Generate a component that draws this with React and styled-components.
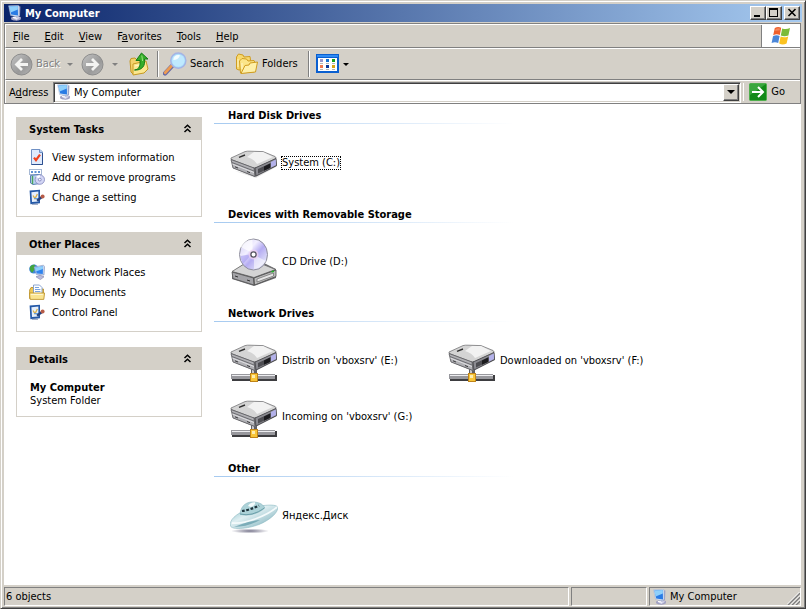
import React from 'react'
import styled, { createGlobalStyle, css } from 'styled-components'

const GlobalStyle = createGlobalStyle`
  * {
    box-sizing: border-box;
  }
  body {
    margin: 0;
    background: #d4d0c8;
  }
  body, button, input {
    font-family: 'DejaVu Sans Condensed', 'DejaVu Sans', sans-serif;
    font-size: 11px;
    line-height: 14px;
    color: #000;
  }
`

/* icons */

const ComputerIcon = ({ size = 16 }) => (
  <svg width={size} height={size} viewBox="0 0 16 16" aria-hidden="true">
    <ellipse cx="9" cy="13.6" rx="5" ry="2" fill="#a3a3c4" />
    <path d="M4.5 12.8L9 11L14 12.5L9.5 15.4z" fill="#d6d6ea" stroke="#8f8fb4" strokeWidth=".5" />
    <path d="M10 1L13.4 1.6L13 11L9 13z" fill="#9c9ec4" />
    <path d="M1.6 .8L10.8 .4L12 .8L12 10L11 11.8L3.6 10.6z" fill="#d4e0f4" stroke="#9fb0d0" strokeWidth=".5" />
    <path d="M2.4 1.6L10.8 1.1L11 10.4L4.2 9.6z" fill="#2a7be4" />
    <path d="M2.4 1.6L10.8 1.1L10.9 4.4L3.6 7.6z" fill="#8fd0fb" />
    <path d="M6 12.4L9.8 13.2" stroke="#fff" />
  </svg>
)

const NavIcon = ({ flip }) => (
  <svg width="23" height="23" viewBox="0 0 23 23" aria-hidden="true">
    <defs>
      <linearGradient id={flip ? 'navF' : 'navB'} x1="0" y1="0" x2="1" y2="1">
        <stop offset="0" stopColor="#c4c4c4" />
        <stop offset=".6" stopColor="#999" />
        <stop offset="1" stopColor="#b4b4b4" />
      </linearGradient>
    </defs>
    <circle cx="11.5" cy="11.5" r="10.5" fill={`url(#${flip ? 'navF' : 'navB'})`} stroke="#8c8c8c" />
    <path
      d={flip ? 'M5 11.5H16M11 6L16.5 11.5L11 17' : 'M18 11.5H7M12 6L6.5 11.5L12 17'}
      fill="none" stroke="#f4f4f2" strokeWidth="2.8"
    />
  </svg>
)

const UpIcon = () => (
  <svg width="24" height="24" viewBox="0 0 24 24" aria-hidden="true">
    <path d="M3 9L4 6.500L8 6L10 8L17 6.5L18 20L6 22L4 20z" fill="#f3d26b" stroke="#c29622" />
    <path d="M6 12L19 9L21 17L17 21L6 23z" fill="#fbe78f" stroke="#c69a24" />
    <path d="M8 14L18 11.5" stroke="#fff8cd" />
    <path d="M7.500 18C12 17.5 13.5 14 13 8.5H9L14.500 1L21 7H17.500C18.500 14 15 18.5 7.500 18z" fill="#35ad2a" stroke="#147c18" />
    <path d="M14.800 3.500L15.600 9" stroke="#98e47d" />
  </svg>
)

const SearchIcon = () => (
  <svg width="24" height="24" viewBox="0 0 24 24" aria-hidden="true">
    <path d="M2 21.5L9 14" stroke="#6769a5" strokeWidth="4.4" strokeLinecap="round" />
    <path d="M2.2 20.8L8.5 14" stroke="#ed9b52" strokeWidth="2.8" strokeLinecap="round" />
    <circle cx="15.3" cy="8.6" r="7.6" fill="#a6dcfa" stroke="#a5b3e4" strokeWidth="1.4" />
    <circle cx="15.3" cy="8.6" r="6.2" fill="#bfe9fe" />
    <path d="M10.3 8C10.5 4 14 2.2 17 3.4C16 6.5 13 8 10.3 8z" fill="#f4fdff" />
  </svg>
)

const FoldersIcon = () => (
  <svg width="24" height="24" viewBox="0 0 24 24" aria-hidden="true">
    <path d="M1.5 17L1.5 5L3.5 2L8 3L9 5L15 4.5L16.5 15L4 18z" fill="#f7d96f" stroke="#cf9c20" />
    <path d="M5.5 21L4.5 9L7 6.5L11.5 7L13 9L19 8.5L20 11L19 20z" fill="#fbe589" stroke="#cf9c20" />
    <path d="M6 21.5L10 13.5L14 13L15 11L22.5 10L20.5 20z" fill="#fef0a9" stroke="#cf9c20" />
    <path d="M3 7V15M7 11V17" stroke="#fff6cc" />
  </svg>
)

const ViewsIcon = () => (
  <svg width="24" height="20" viewBox="0 0 24 20" shapeRendering="crispEdges" aria-hidden="true">
    <rect x="0" y="0" width="23" height="19" rx="1" fill="#0a5fd0" />
    <rect x="1" y="1" width="21" height="2" fill="#2f8bf4" />
    <rect x="2" y="4" width="19" height="13" fill="#fff" />
    <rect x="4" y="5" width="3" height="3" fill="#9a98cc" />
    <rect x="10" y="5" width="3" height="3" fill="#1572d2" />
    <rect x="16" y="5" width="3" height="3" fill="#17a01c" />
    <rect x="4" y="11" width="3" height="3" fill="#f0784e" />
    <rect x="10" y="11" width="3" height="3" fill="#0a3797" />
    <rect x="16" y="11" width="3" height="3" fill="#d9a417" />
    <path d="M4 9.5h3M10 9.5h3M16 9.5h3M4 15.5h3M10 15.5h3M16 15.5h3" stroke="#b5b5b5" />
  </svg>
)

const FlagIcon = () => (
  <svg width="20" height="20" viewBox="0 0 20 20" aria-hidden="true">
    <path d="M3.8 2Q7 .2 10.2 1.8L8.8 9Q5.6 7.6 2.2 9.2z" fill="#f0602c" />
    <path d="M11.2 2.4Q15 4 19 2L17.4 9.4Q13.4 11 9.8 9.4z" fill="#7cbb3a" />
    <path d="M2 10.2Q5.4 8.6 8.6 10L7.2 17Q4 15.4 .6 17z" fill="#4a86d8" />
    <path d="M9.6 10.6Q13.2 12 17.2 10.4L15.6 17.6Q11.6 19.4 8.2 17.6z" fill="#fbc220" />
    <path d="M4.6 3Q7 1.8 9 2.6L8.6 4.6Q6.2 4 4.2 5z" fill="#f79a70" opacity=".7" />
  </svg>
)

const GoIcon = () => (
  <svg width="18" height="18" viewBox="0 0 18 18" aria-hidden="true">
    <rect x=".5" y=".5" width="17" height="17" rx="1" fill="#128a18" stroke="#4fae4d" />
    <path d="M1 1H17L1 12z" fill="#5fc263" opacity=".5" />
    <path d="M3 9H14M9 4L14 9L9 14" fill="none" stroke="#fff" strokeWidth="2" />
  </svg>
)

const InfoIcon = () => (
  <svg width="16" height="16" viewBox="0 0 16 16" aria-hidden="true">
    <path d="M2.5 .5H11L13.5 3V15.5H2.5z" fill="#dfeafc" stroke="#6f90c4" />
    <path d="M10.5 .5V3.5H13.5" fill="#b8cdf0" stroke="#6f90c4" />
    <path d="M13.5 4V15.5H2.500" fill="none" stroke="#2d4f8f" />
    <path d="M5 8.6L7 11.2L11 5.6" fill="none" stroke="#f0401c" strokeWidth="2.2" />
  </svg>
)

const ProgramsIcon = () => (
  <svg width="16" height="16" viewBox="0 0 16 16" aria-hidden="true">
    <rect x=".5" y=".5" width="12" height="5" fill="#fff" stroke="#a6b8d4" />
    <path d="M2 3h2M5.500 3h2M9 3h2" stroke="#5f92d4" strokeWidth="2" />
    <path d="M1.5 6.500L9 5.5L11 6V14.5L4 15.5L1.5 14z" fill="#b9d3f0" stroke="#5a7fb4" />
    <path d="M3.500 7V15" stroke="#4aa45a" strokeWidth="1.400" />
    <circle cx="10.8" cy="10.6" r="4.7" fill="#d3d6f5" stroke="#8085bd" strokeWidth=".8" />
    <path d="M10.8 10.6L7 7.6A4.4 4.4 0 0 1 11 6.2z" fill="#fff" />
    <circle cx="10.8" cy="10.6" r="1.4" fill="#fff" stroke="#7177b2" strokeWidth=".8" />
  </svg>
)

const SettingIcon = () => (
  <svg width="16" height="16" viewBox="0 0 16 16" aria-hidden="true">
    <path d="M.6 1.6L11 .8V14.2L1.4 15.2z" fill="#2459a8" />
    <path d="M2.4 3.2L9.4 2.6V12.4L3 13z" fill="#e6f0fd" />
    <path d="M4 6.5L6 9.6L8.4 5" fill="none" stroke="#d8b04a" strokeWidth="1.3" />
    <path d="M5 9.6H10" stroke="#5d9be0" />
    <path d="M8 11.6L13 8" stroke="#26437c" strokeWidth="2.4" />
    <circle cx="13.6" cy="7.6" r="2" fill="#b75c48" />
    <path d="M3 15.200H9" stroke="#7c8db0" />
  </svg>
)

const NetworkIcon = () => (
  <svg width="16" height="16" viewBox="0 0 16 16" aria-hidden="true">
    <circle cx="4.8" cy="5" r="4.6" fill="#3f86d8" />
    <path d="M1 3Q3 0 6 .8Q5 3 6.4 4.6Q4.2 7 3.6 8.8Q0 6.8 1 3z" fill="#43a63c" />
    <path d="M5 3L14.4 1.2L15.6 2.4L15 11L7.4 10.6z" fill="#c8d6ef" stroke="#7f90bb" strokeWidth=".6" />
    <path d="M6 3.8L14 2.2L13.8 10L7.800 9.6z" fill="#2f83ee" />
    <path d="M6 3.8L14 2.2L13.9 5L6.800 7.4z" fill="#8fd0fb" />
    <path d="M7 12.8L11 11.2L15 12.8L11.4 15.6z" fill="#b9bbdc" stroke="#7c7fa8" strokeWidth=".6" />
  </svg>
)

const DocumentsIcon = () => (
  <svg width="16" height="16" viewBox="0 0 16 16" aria-hidden="true">
    <path d="M.6 6L2 3.500H4L5 5H14.500V14.5H.6z" fill="#eec755" stroke="#b98d22" strokeWidth=".8" />
    <path d="M4.500 1H10.5L13 3.5V11H4.500z" fill="#fff" stroke="#6e8fc4" strokeWidth=".8" />
    <path d="M6 3.5h4M6 5.5h5.4M6 7.5h5.4" stroke="#79a3de" />
    <path d="M.4 9H15.6L14.8 15.4H1.2z" fill="#fae491" stroke="#b98d22" strokeWidth=".8" />
    <path d="M2 10.4H13.8" stroke="#fffad8" />
  </svg>
)

const ChevronsIcon = () => (
  <svg width="9" height="9" viewBox="0 0 9 9" aria-hidden="true">
    <path d="M1.500 4L4.5 1.200L7.500 4M1.500 8L4.5 5.200L7.500 8" fill="none" stroke="#000" strokeWidth="1.500" />
  </svg>
)

const DriveBody = () => (
  <g>
    <path d="M1 8L24 2L46 7L47 16L25 27L3 18z" fill="#77777c" />
    <path d="M1 8L15 1.600Q17 1 20 1.200L33 1.600L45 6.500Q47 8 45 9L27 17.500Q25 18 22 17.400L2 9.800Q.500 9 1 8z" fill="#d4d4d4" stroke="#77777a" strokeWidth=".8" />
    <path d="M17 7L24 2H33L43 7L27 14Q24 9 17 7z" fill="#f2f2f2" />
    <path d="M1 9.500L24 18L25 26.500L3 18z" fill="#b0b0b4" stroke="#5c5c60" strokeWidth=".8" />
    <path d="M2 12.500L24 21" stroke="#6d6d72" />
    <path d="M2.500 14.200L24 22.500" stroke="#e0e0e3" />
    <path d="M25 18L46 8.500L46.500 15.500L26 26z" fill="#8b8b91" stroke="#454549" strokeWidth=".8" />
    <path d="M28 19L41 13V17.500L28 23.500z" fill="#4d4d52" />
    <path d="M34 16.500L40 13.500V18L34 20.800z" fill="#1b1b1e" />
    <path d="M41 12L45.800 9.500L46 15L41 17.500z" fill="#b3b1ea" />
    <path d="M9 7.400L15 5" stroke="#2d2d2d" strokeWidth="1.400" />
    <path d="M5 16.800L8 18M17 21.500L20 22.700" stroke="#3c3c3f" />
  </g>
)

const HardDiskIcon = () => (
  <svg width="48" height="48" viewBox="0 0 48 48" aria-hidden="true">
    <path d="M5 32L26 39L46 28L44 26L26 36z" fill="#c9c9c9" opacity=".5" />
    <g transform="translate(0 11)"><DriveBody /></g>
  </svg>
)

const CdDriveIcon = () => (
  <svg width="48" height="48" viewBox="0 0 48 48" aria-hidden="true">
    <defs>
      <linearGradient id="disc" x1="0" y1="0" x2="1" y2="1">
        <stop offset="0" stopColor="#cfcaf4" />
        <stop offset=".35" stopColor="#f2efff" />
        <stop offset=".55" stopColor="#b5acf2" />
        <stop offset=".8" stopColor="#dcdcf8" />
        <stop offset="1" stopColor="#9fa0b8" />
      </linearGradient>
    </defs>
    <path d="M2 34L15 25H34L46 31V40L24 48L2 41z" fill="#6d6d70" />
    <path d="M2 33.500L14 26H32L45.500 31.500L24 39.500z" fill="#d4d4d4" stroke="#6a6a6a" strokeWidth=".8" />
    <path d="M2 34L23.500 40L24 47L3 40.500z" fill="#a4a4a8" stroke="#555" strokeWidth=".8" />
    <path d="M24 40L46 32V38.500L24.500 47z" fill="#bcbcbc" stroke="#4c4c4c" strokeWidth=".8" />
    <path d="M27 41L43.500 35V38L27 44z" fill="#e6e6e6" stroke="#5b5b5b" strokeWidth=".6" />
    <path d="M41.500 34L44 33" stroke="#23b02c" strokeWidth="1.500" />
    <path d="M5 38L8 39M17 42L20 43" stroke="#333" />
    <ellipse cx="23.500" cy="16.500" rx="14" ry="15.500" fill="url(#disc)" stroke="#8f8f9c" />
    <path d="M22.500 15L10.500 9Q14 2 22.500 1.500z" fill="#fff" opacity=".7" />
    <path d="M24 17L36 23Q31 30 24 31z" fill="#fff" opacity=".55" />
    <path d="M22 16L13 26Q10.500 21 10.500 18z" fill="#a499f0" opacity=".6" />
    <circle cx="23.500" cy="16.500" r="5" fill="#eccff0" opacity=".8" />
    <circle cx="23.500" cy="16.500" r="2.600" fill="#fff" stroke="#55535f" strokeWidth="1.300" />
  </svg>
)

const NetworkDriveIcon = () => (
  <svg width="48" height="48" viewBox="0 0 48 48" aria-hidden="true">
    <rect x="21" y="29" width="6" height="9" fill="#5f5f65" />
    <rect x="22" y="29" width="2" height="9" fill="#c6c6cc" />
    <g transform="translate(0 7)"><DriveBody /></g>
    <rect x="2" y="38" width="45" height="6" fill="#3d3d40" />
    <rect x="1" y="37" width="44" height="5" fill="#98989d" />
    <rect x="2" y="38" width="43" height="1" fill="#ededf0" />
    <rect x="20.500" y="36.500" width="7" height="8" fill="#f8c63a" stroke="#c08418" />
    <rect x="22" y="38" width="3" height="3" fill="#fdedb0" />
  </svg>
)

const SaucerIcon = () => (
  <svg width="48" height="48" viewBox="0 0 48 48" aria-hidden="true">
    <defs>
      <linearGradient id="hull" x1="0" y1="0" x2="1" y2="1">
        <stop offset="0" stopColor="#7fb7c2" />
        <stop offset=".4" stopColor="#dfeff2" />
        <stop offset="1" stopColor="#72a9b5" />
      </linearGradient>
      <radialGradient id="shade">
        <stop offset="0" stopColor="#77758c" />
        <stop offset="1" stopColor="#77758c" stopOpacity="0" />
      </radialGradient>
    </defs>
    <ellipse cx="20" cy="39" rx="19" ry="2.500" fill="url(#shade)" />
    <path d="M.5 34C-1 28 6 22 16 18C28 13 46 11.500 47.500 15C49 20 40 28 29 32.500C17 37 2 38 .5 34z" fill="url(#hull)" stroke="#8dbac2" strokeWidth=".6" />
    <path d="M2 31Q12 32 25 27Q39 22 47 15" fill="none" stroke="#f4fafb" strokeWidth="1.800" />
    <path d="M4 35Q18 35 30 28Q19 29 12 32z" fill="#5e98a6" opacity=".7" />
    <path d="M10 22C11 13 17 9.500 24 10C30 10.500 34 13 34.500 16C30 21 18 25 10 22z" fill="#acd2d8" stroke="#86b4bd" strokeWidth=".6" />
    <path d="M18 14Q20 10 25 10.200Q26 13 21 15z" fill="#f4fbfc" />
    <path d="M12 19Q20 18 29 13.500" fill="none" stroke="#1e343d" strokeWidth="2.200" strokeDasharray="2.800 1.600" />
    <path d="M10 22Q22 25 34.500 16" fill="none" stroke="#6a9fa9" />
  </svg>
)

/* window frame */

const Window = styled.div`
  display: flex;
  flex-direction: column;
  min-height: 100vh;
  padding: 2px;
  background: #d4d0c8;
  border: 1px solid;
  border-color: #d4d0c8 #404040 #404040 #d4d0c8;
  box-shadow: inset 1px 1px #fff, inset -1px -1px #808080;
`

const Inner = styled.div`
  display: flex;
  flex-direction: column;
  flex: 1;
  padding: 1px 1px 0;
`

const TitleBar = styled.header`
  display: flex;
  align-items: center;
  height: 18px;
  padding: 0 2px 0 3px;
  background: linear-gradient(to right, #0a246a, #a6caf0);
`

const Title = styled.h1`
  flex: 1;
  margin: 0;
  padding: 1px 0 0 2px;
  font-size: 11px;
  line-height: 14px;
  color: #fff;
`

const raised = css`
  border: 1px solid;
  border-color: #fff #404040 #404040 #fff;
  box-shadow: inset -1px -1px #808080;
  background: #d4d0c8;
`

const CaptionButton = styled.button`
  ${raised}
  display: grid;
  place-items: center;
  width: 16px;
  height: 14px;
  padding: 0 1px 1px 0;
  margin-left: ${(props) => (props.$apart ? '2px' : '0')};
`

/* bars */

const Bars = styled.div`
  margin: 1px 1px 0 0;
  border: 1px solid #808080;
`

const Bar = styled.div`
  display: flex;
  align-items: center;
  height: ${(props) => props.$height};
  border-top: 1px solid #fff;
  border-left: 1px solid #fff;
  border-bottom: ${(props) => (props.$last ? '0' : '1px solid #808080')};
`

const Menu = styled.nav`
  display: flex;
  flex: 1;
  padding-top: 1px;
`

const MenuItem = styled.button`
  padding: 0 8px 0 7px;
  background: none;
  border: 0;
`

const Flag = styled.div`
  display: grid;
  place-items: center;
  align-self: stretch;
  width: 39px;
  background: #fff;
  border-left: 1px solid #808080;
`

const ToolButton = styled.button`
  display: flex;
  align-items: center;
  gap: 3px;
  padding: 0 ${(props) => props.$right || '0'} 0 ${(props) => props.$left || '0'};
  background: none;
  border: 0;

  &:disabled {
    color: #808080;
    text-shadow: 1px 1px #fff;
  }
`

const Arrow = styled.span`
  border: 3px solid transparent;
  border-top-color: ${(props) => (props.$dim ? '#808080' : '#000')};
  border-bottom: 0;
`

const Separator = styled.span`
  width: 2px;
  height: 26px;
  background: linear-gradient(to right, #808080 50%, #fff 50%);
`

const AddressLabel = styled.label`
  width: 47px;
  padding: 1px 0 0 3px;
`

const AddressBox = styled.div`
  display: flex;
  align-items: center;
  flex: 1;
  height: 21px;
  padding: 1px 1px 1px 2px;
  background: #fff;
  border: 1px solid;
  border-color: #808080 #fff #fff #808080;
  box-shadow: inset 1px 1px #404040, inset -1px -1px #d4d0c8;
`

const AddressInput = styled.input`
  flex: 1;
  min-width: 0;
  padding: 1px 0 0 2px;
  border: 0;
  outline: 0;
`

const DropButton = styled.button`
  ${raised}
  display: grid;
  place-items: center;
  width: 16px;
  height: 17px;
  padding: 0;

  ${Arrow} {
    border-width: 4px 4px 0;
  }
`

const GoButton = styled.button`
  display: flex;
  align-items: center;
  gap: 4px;
  margin-left: 2px;
  padding: 0 15px 0 5px;
  background: none;
  border: 0;
  border-left: 1px solid #fff;
`

/* body */

const Main = styled.div`
  display: flex;
  flex: 1;
  margin-right: 1px;
  background: #fff;
`

const Sidebar = styled.aside`
  display: flex;
  flex-direction: column;
  gap: 15px;
  width: 198px;
  padding: 13px 0 13px 12px;
`

const PanelHead = styled.div`
  display: flex;
  align-items: center;
  justify-content: space-between;
  height: 23px;
  padding: 3px 10px 0 13px;
  background: #d4d0c8;

  h2 {
    margin: 0;
    font-size: 11px;
  }
`

const Collapse = styled.button`
  display: grid;
  padding: 0 0 4px;
  background: none;
  border: 0;
`

const PanelBody = styled.div`
  padding: ${(props) => (props.$text ? '11px 12px 9px 13px' : '7px 12px 9px')};
  line-height: 13px;
  border: 1px solid #d4d0c8;
  border-top: 0;
`

const Task = styled.a`
  display: flex;
  align-items: center;
  gap: 7px;
  height: 20px;
  color: #000;
  text-decoration: none;
`

const Files = styled.main`
  flex: 1;
  padding: 3px 0 0 12px;
`

const Group = styled.section`
  margin-bottom: 15px;
`

const GroupTitle = styled.h2`
  height: 17px;
  margin: 0;
  padding: 1px 0 0 14px;
  font-size: 11px;
  line-height: 16px;
  background: linear-gradient(to right, #a6caf0, #fff 300px) bottom / 100% 1px no-repeat;
`

const Items = styled.div`
  display: grid;
  grid-template-columns: repeat(auto-fill, 218px);
  padding: 11px 0 0 16px;
`

const Item = styled.button`
  display: flex;
  align-items: center;
  gap: 3px;
  height: 56px;
  padding: 0;
  background: none;
  border: 0;
  white-space: nowrap;

  span {
    line-height: 12px;
    border: 1px dotted ${(props) => (props.$focused ? '#000' : 'transparent')};
  }
`

const StatusBar = styled.footer`
  display: flex;
  gap: 2px;
  margin-right: 1px;
  padding-top: 2px;
`

const StatusCell = styled.div`
  display: flex;
  align-items: center;
  gap: 2px;
  flex: ${(props) => (props.$width ? `0 0 ${props.$width}` : '1')};
  height: 19px;
  padding-left: ${(props) => (props.$icon ? '2px' : '1px')};
  border: 1px solid;
  border-color: #808080 #fff #fff #808080;
`

const Grip = styled.svg`
  margin-left: auto;
  align-self: flex-end;
`

const Panel = ({ title, text, children }) => (
  <section>
    <PanelHead>
      <h2>{title}</h2>
      <Collapse aria-label={`Collapse ${title}`}><ChevronsIcon /></Collapse>
    </PanelHead>
    <PanelBody $text={text}>{children}</PanelBody>
  </section>
)

const tasks = [
  { label: 'View system information', Icon: InfoIcon },
  { label: 'Add or remove programs', Icon: ProgramsIcon },
  { label: 'Change a setting', Icon: SettingIcon },
]

const places = [
  { label: 'My Network Places', Icon: NetworkIcon },
  { label: 'My Documents', Icon: DocumentsIcon },
  { label: 'Control Panel', Icon: SettingIcon },
]

const groups = [
  { title: 'Hard Disk Drives', items: [{ label: 'System (C:)', Icon: HardDiskIcon, focused: true }] },
  { title: 'Devices with Removable Storage', items: [{ label: 'CD Drive (D:)', Icon: CdDriveIcon }] },
  {
    title: 'Network Drives',
    items: [
      { label: "Distrib on 'vboxsrv' (E:)", Icon: NetworkDriveIcon },
      { label: "Downloaded on 'vboxsrv' (F:)", Icon: NetworkDriveIcon },
      { label: "Incoming on 'vboxsrv' (G:)", Icon: NetworkDriveIcon },
    ],
  },
  { title: 'Other', items: [{ label: 'Яндекс.Диск', Icon: SaucerIcon }] },
]

const App = () => {
  return (
    <Window>
      <GlobalStyle />
      <Inner>
        <TitleBar>
          <ComputerIcon />
          <Title>My Computer</Title>
          <CaptionButton aria-label="Minimize">
            <svg width="10" height="9" shapeRendering="crispEdges"><rect x="1" y="7" width="6" height="2" /></svg>
          </CaptionButton>
          <CaptionButton aria-label="Maximize">
            <svg width="10" height="9" shapeRendering="crispEdges"><path d="M0 0H9V9H0zM1 2V8H8V2z" fillRule="evenodd" /></svg>
          </CaptionButton>
          <CaptionButton aria-label="Close" $apart>
            <svg width="10" height="9"><path d="M1.500 1L8.500 8M8.500 1L1.500 8" stroke="#000" strokeWidth="1.600" /></svg>
          </CaptionButton>
        </TitleBar>

        <Bars>
          <Bar $height="24px">
            <Menu>
              <MenuItem><u>F</u>ile</MenuItem>
              <MenuItem><u>E</u>dit</MenuItem>
              <MenuItem><u>V</u>iew</MenuItem>
              <MenuItem>F<u>a</u>vorites</MenuItem>
              <MenuItem><u>T</u>ools</MenuItem>
              <MenuItem><u>H</u>elp</MenuItem>
            </Menu>
            <Flag><FlagIcon /></Flag>
          </Bar>
          <Bar $height="32px">
            <ToolButton disabled $left="4px" $right="7px"><NavIcon />Back</ToolButton>
            <Arrow $dim />
            <ToolButton disabled aria-label="Forward" $left="8px" $right="8px"><NavIcon flip /></ToolButton>
            <Arrow $dim />
            <ToolButton aria-label="Up" $left="9px" $right="6px"><UpIcon /></ToolButton>
            <Separator />
            <ToolButton $left="4px" $right="11px"><SearchIcon />Search</ToolButton>
            <ToolButton $right="10px"><FoldersIcon />Folders</ToolButton>
            <Separator />
            <ToolButton aria-label="Views" $left="6px"><ViewsIcon /><Arrow /></ToolButton>
          </Bar>
          <Bar $height="23px" $last>
            <AddressLabel htmlFor="address">A<u>d</u>dress</AddressLabel>
            <AddressBox>
              <ComputerIcon />
              <AddressInput id="address" defaultValue="My Computer" />
              <DropButton aria-label="Show addresses"><Arrow /></DropButton>
            </AddressBox>
            <GoButton><GoIcon />Go</GoButton>
          </Bar>
        </Bars>

        <Main>
          <Sidebar>
            <Panel title="System Tasks">
              {tasks.map(({ label, Icon }) => (
                <Task key={label} href="#"><Icon />{label}</Task>
              ))}
            </Panel>
            <Panel title="Other Places">
              {places.map(({ label, Icon }) => (
                <Task key={label} href="#"><Icon />{label}</Task>
              ))}
            </Panel>
            <Panel title="Details" text>
              <strong>My Computer</strong>
              <div>System Folder</div>
            </Panel>
          </Sidebar>
          <Files>
            {groups.map((group) => (
              <Group key={group.title}>
                <GroupTitle>{group.title}</GroupTitle>
                <Items>
                  {group.items.map(({ label, Icon, focused }) => (
                    <Item key={label} $focused={focused}><Icon /><span>{label}</span></Item>
                  ))}
                </Items>
              </Group>
            ))}
          </Files>
        </Main>

        <StatusBar>
          <StatusCell>6 objects</StatusCell>
          <StatusCell $width="76px" />
          <StatusCell $width="152px" $icon>
            <ComputerIcon />My Computer
            <Grip width="13" height="13" viewBox="0 0 13 13" aria-hidden="true">
              <path d="M1 13L13 1M5 13L13 5M9 13L13 9" stroke="#808080" strokeWidth="1.600" />
              <path d="M0 12.500L12.500 0M4 12.500L13 3.500M8 12.500L13 7.500" stroke="#fff" />
            </Grip>
          </StatusCell>
        </StatusBar>
      </Inner>
    </Window>
  )
}

export default App
